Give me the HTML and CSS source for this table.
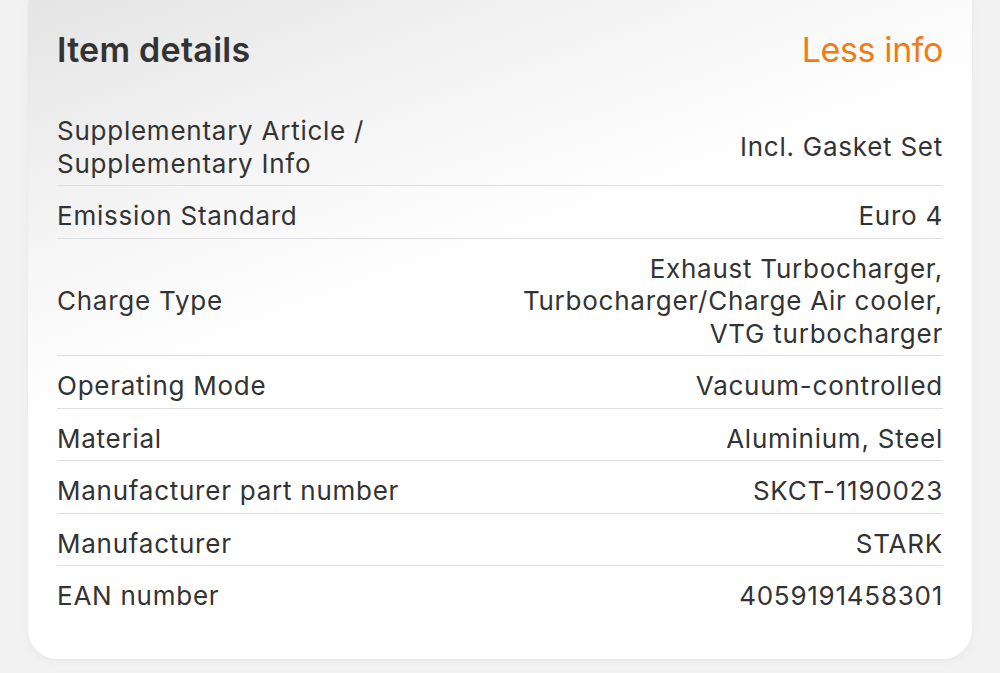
FILE: index.html
```html
<!DOCTYPE html>
<html lang="en">
<head>
<meta charset="utf-8">
<title>Item details</title>
<link rel="stylesheet" href="styles.css">
</head>
<body>
<section class="card">
  <header class="card-head">
    <h2 class="title">Item details</h2>
    <a class="toggle" href="#">Less info</a>
  </header>
  <dl class="specs">
    <div class="row"><dt>Supplementary Article /<br>Supplementary Info</dt><dd>Incl. Gasket Set</dd></div>
    <div class="row"><dt>Emission Standard</dt><dd>Euro 4</dd></div>
    <div class="row"><dt>Charge Type</dt><dd>Exhaust Turbocharger,<br>Turbocharger/Charge Air cooler,<br>VTG turbocharger</dd></div>
    <div class="row"><dt>Operating Mode</dt><dd>Vacuum-controlled</dd></div>
    <div class="row"><dt>Material</dt><dd>Aluminium, Steel</dd></div>
    <div class="row"><dt>Manufacturer part number</dt><dd>SKCT-1190023</dd></div>
    <div class="row"><dt>Manufacturer</dt><dd>STARK</dd></div>
    <div class="row last"><dt>EAN number</dt><dd>4059191458301</dd></div>
  </dl>
</section>
</body>
</html>
```
FILE: styles.css
```css
html, body {
  margin: 0;
  padding: 0;
}
body {
  background: #f2f2f2;
  font-family: Inter, "Noto Sans", "Liberation Sans", sans-serif;
  color: #333333;
  height: 673px;
  overflow: hidden;
}
.card {
  margin: -24px 28px 0;
  padding: 54px 29px 41px;
  border-radius: 30px;
  background:
    linear-gradient(160deg, #e3e3e3 0%, #ebebeb 12%, #f6f6f6 28%, #ffffff 44%);
  box-shadow: 0 2px 10px rgba(0, 0, 0, 0.04);
}
.card-head {
  display: flex;
  justify-content: space-between;
  align-items: baseline;
  margin-bottom: 31px;
  line-height: 40px;
}
.title {
  margin: 0;
  font-size: 34px;
  font-weight: 600;
  color: #333333;
  letter-spacing: 0.25px;
}
.toggle {
  font-size: 34px;
  font-weight: 400;
  color: #f07c16;
  text-decoration: none;
  letter-spacing: -0.4px;
}
.specs {
  margin: 0;
}
.row {
  display: flex;
  justify-content: space-between;
  align-items: center;
  padding: 14px 0 5px;
  border-bottom: 1px solid #dedede;
  font-size: 26px;
  line-height: 32.5px;
  letter-spacing: 0.75px;
}
.row.last {
  border-bottom: none;
}
.row dt {
  margin: 0;
}
.row dd {
  margin: 0;
  text-align: right;
}
```
